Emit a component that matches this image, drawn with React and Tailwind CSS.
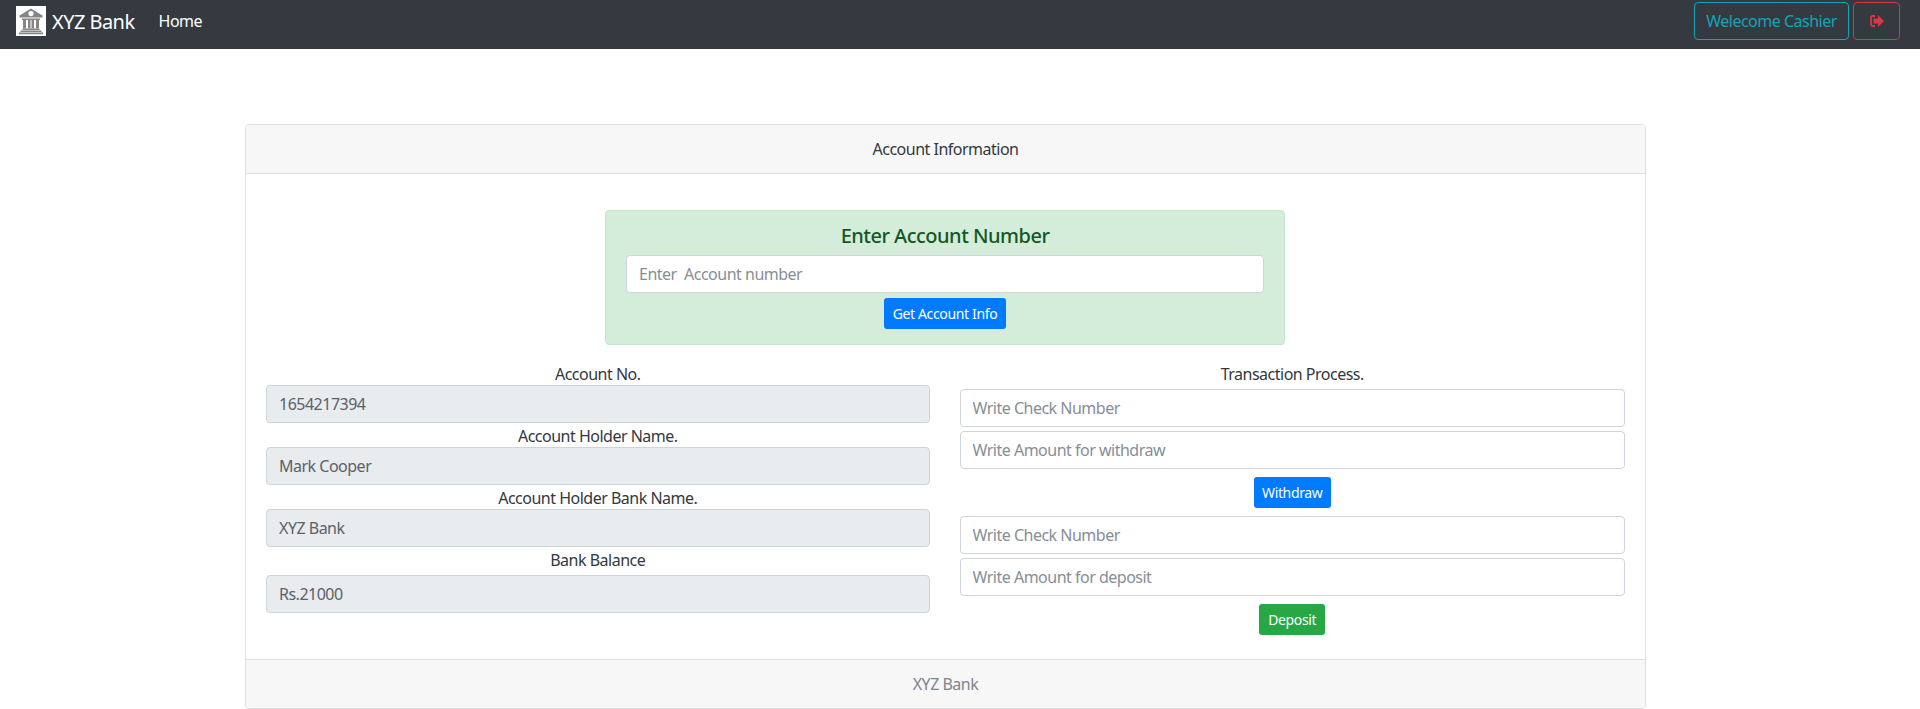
import React from "react";

const font = { fontFamily: '"Noto Sans", sans-serif' };

function Logo() {
  return (
    <svg width="30" height="30" viewBox="0 0 30 30" className="block shrink-0">
      <rect width="30" height="30" fill="#ffffff" />
      <path d="M15 2.500 L26.500 9.500 L26.500 11.500 L3.500 11.500 L3.500 9.500 Z" fill="#858585" />
      <circle cx="15" cy="7.600" r="2.600" fill="#ffffff" />
      <path d="M6 12.500h18v1.500H6z M6.500 22.500h17v1.500h-17z M4.500 24.500h21v1.500h-21z M3 26.500h24v1.800H3z" fill="#858585" />
      <path d="M7 14h3v8.500H7z M12 14h2.500v8.500H12z M15.500 14h2.500v8.500h-2.500z M20 14h3v8.500h-3z" fill="#858585" />
    </svg>
  );
}

function SignOut() {
  return (
    <svg width="14" height="12" viewBox="0 0 14 12" className="block">
      <path d="M5 1H2.500Q1 1 1 2.500v7Q1 11 2.500 11H5" fill="none" stroke="#dc3545" strokeWidth="1.800" />
      <path d="M3.500 3.500h4.500V0l6 6-6 6V8.500H3.500z" fill="#dc3545" />
    </svg>
  );
}

function Field({ value, placeholder, readOnly }) {
  return (
    <input
      readOnly={readOnly}
      defaultValue={value}
      placeholder={placeholder}
      className={
        "block h-[38px] w-full rounded-[4px] border border-[#ced4da] px-3 text-base text-[#5a6167] tracking-[-0.5px] outline-none placeholder:text-[#868e96] " +
        (readOnly ? "bg-[#e9ecef]" : "bg-white")
      }
      style={font}
    />
  );
}

function Label({ children, className = "" }) {
  return <div className={"h-6 text-center text-base leading-[26px] text-[#33383d] tracking-[-0.5px] " + className}>{children}</div>;
}

function Btn({ children, color, w }) {
  return (
    <button className={"h-[31px] rounded-[3px] text-sm leading-[21px] text-white tracking-[-0.35px] " + color + " " + w}>{children}</button>
  );
}

export default function App() {
  return (
    <div className="min-h-[709px] bg-white" style={font}>
      <nav className="flex h-[49px] items-start justify-between bg-[#343a40] pl-4 pr-5">
        <div className="flex items-start">
          <div className="mt-[6px]"><Logo /></div>
          <span className="ml-[6px] mt-[7px] text-xl leading-[30px] text-white tracking-[-0.55px]">XYZ Bank</span>
          <a className="ml-6 mt-[9px] text-base leading-6 text-white tracking-[-0.5px]">Home</a>
        </div>
        <div className="mt-[2px] flex gap-1">
          <button className="h-[38px] w-[155px] rounded-[4px] border border-[#17a2b8] text-base text-[#17a2b8] tracking-[-0.5px]">Welecome Cashier</button>
          <button className="flex h-[38px] w-[47px] items-center justify-center rounded-[4px] border border-[#dc3545]"><SignOut /></button>
        </div>
      </nav>

      <main className="pl-[245px] pr-[274px] pt-[75px]">
        <section className="flex h-[585px] w-[1401px] flex-col overflow-hidden rounded-[4px] border border-[#dfdfdf]">
          <header className="h-[49px] shrink-0 border-b border-[#dfdfdf] bg-[#f7f7f7] text-center text-base leading-[49px] text-[#33383d] tracking-[-0.5px]">Account Information</header>
          <div className="flex-1 px-5 pt-9">
            <div className="ml-[339px] h-[135px] w-[680px] rounded-[4px] border border-[#c3e6cb] bg-[#d4edda] px-5 pt-3 text-center">
              <h5 className="mb-2 h-6 text-xl font-medium leading-[26px] text-[#155724] tracking-[-0.5px]">Enter Account Number</h5>
              <Field placeholder="Enter  Account number" />
              <div className="mt-[5px]"><Btn color="bg-[#007bff]" w="w-[122px]">Get Account Info</Btn></div>
            </div>
            <div className="mt-4 grid grid-cols-[663.5px_1fr] gap-[30px]">
              <div>
                <Label>Account No.</Label>
                <Field readOnly value="1654217394" />
                <Label>Account Holder Name.</Label>
                <Field readOnly value="Mark Cooper" />
                <Label>Account Holder Bank Name.</Label>
                <Field readOnly value="XYZ Bank" />
                <Label className="mb-1">Bank Balance</Label>
                <Field readOnly value="Rs.21000" />
              </div>
              <div>
                <Label className="mb-1">Transaction Process.</Label>
                <div className="flex flex-col gap-1">
                  <Field placeholder="Write Check Number" />
                  <Field placeholder="Write Amount for withdraw" />
                </div>
                <div className="mt-2 text-center"><Btn color="bg-[#007bff]" w="w-[77px]">Withdraw</Btn></div>
                <div className="mt-2 flex flex-col gap-1">
                  <Field placeholder="Write Check Number" />
                  <Field placeholder="Write Amount for deposit" />
                </div>
                <div className="mt-2 text-center"><Btn color="bg-[#28a745]" w="w-[66px]">Deposit</Btn></div>
              </div>
            </div>
          </div>
          <footer className="h-[49px] shrink-0 border-t border-[#dfdfdf] bg-[#f7f7f7] text-center text-base leading-[49px] text-[#7c858d] tracking-[-0.5px]">XYZ Bank</footer>
        </section>
      </main>
    </div>
  );
}
